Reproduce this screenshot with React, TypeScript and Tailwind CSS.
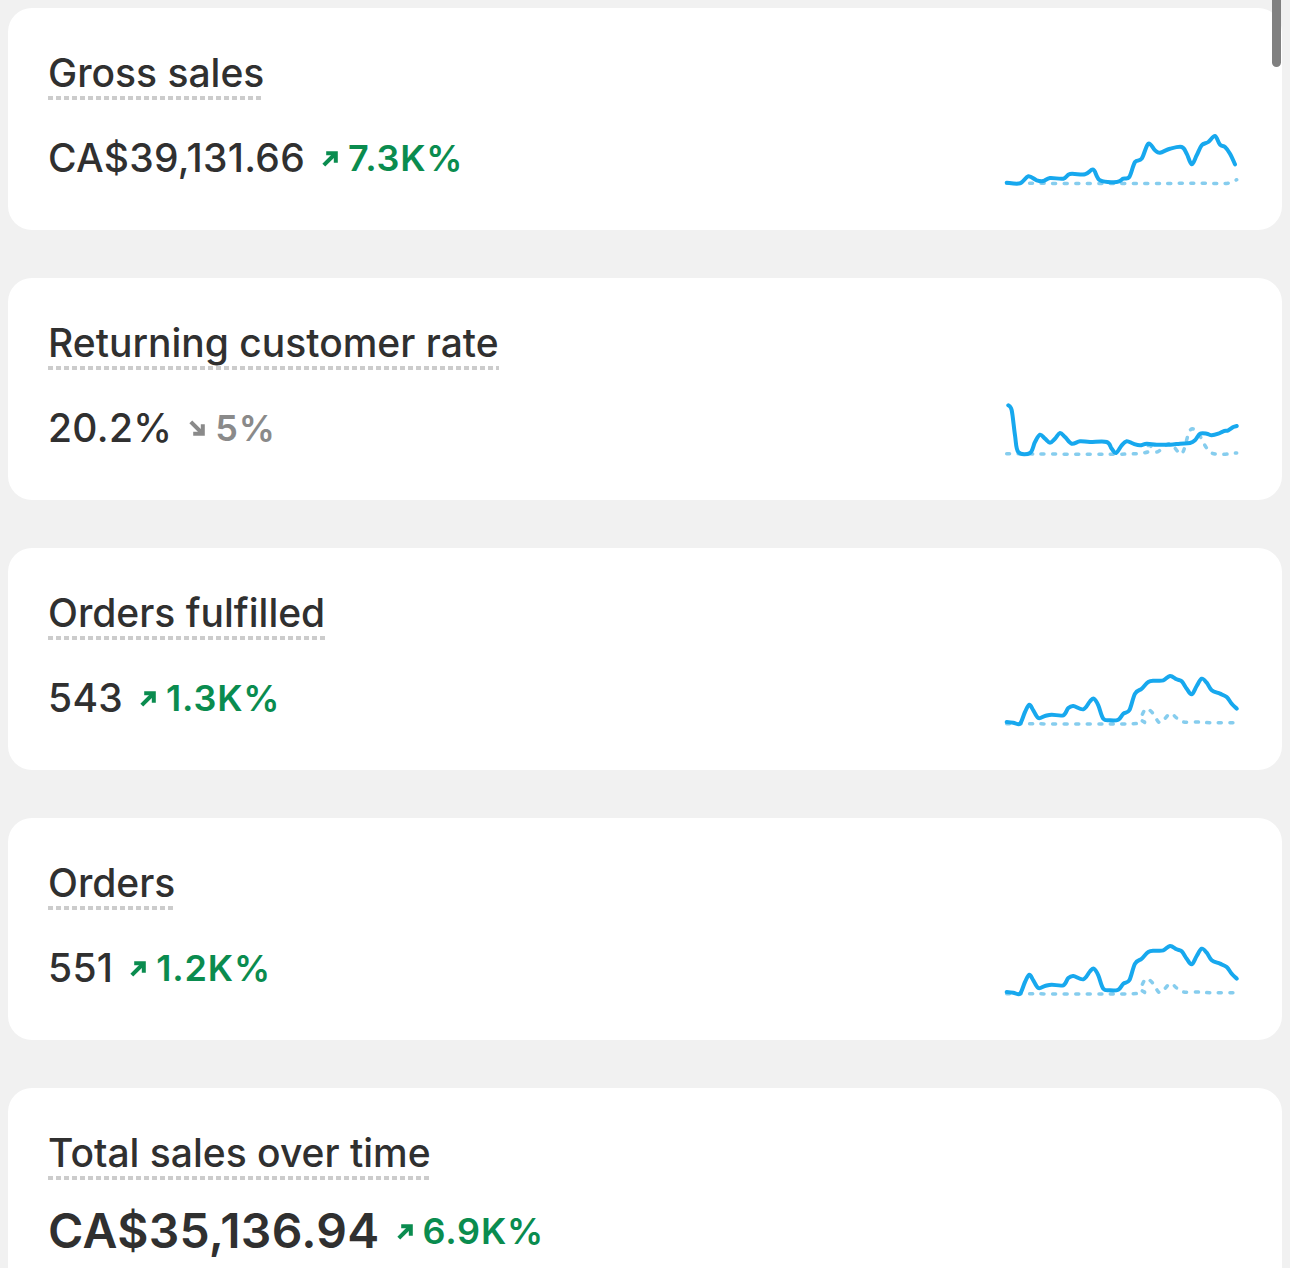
import React from 'react';

type Pt = [number, number];

// Catmull-Rom -> cubic bezier, gives the soft line of the sparklines
function smooth(pts: Pt[]): string {
  let d = `M${pts[0][0]},${pts[0][1]}`;
  for (let i = 0; i < pts.length - 1; i++) {
    const p0 = pts[i - 1] || pts[i];
    const p1 = pts[i];
    const p2 = pts[i + 1];
    const p3 = pts[i + 2] || p2;
    const c1x = p1[0] + (p2[0] - p0[0]) / 6;
    const c1y = p1[1] + (p2[1] - p0[1]) / 6;
    const c2x = p2[0] - (p3[0] - p1[0]) / 6;
    const c2y = p2[1] - (p3[1] - p1[1]) / 6;
    d += ` C${c1x.toFixed(1)},${c1y.toFixed(1)} ${c2x.toFixed(1)},${c2y.toFixed(1)} ${p2[0]},${p2[1]}`;
  }
  return d;
}

const grossNow: Pt[] = [
  [4.7, 56.7], [18, 57.3], [26.3, 50.3], [34.7, 54.3], [41.3, 55], [48, 52], [61.3, 52.7], [68, 48],
  [83, 48.3], [91.3, 43.7], [98, 54.3], [114.7, 56], [121.3, 52.7], [127.3, 51], [133, 36], [139.7, 32.7],
  [146.3, 17.7], [153, 24.3], [158, 26.7], [168, 22.7], [179.7, 21], [184.7, 27.7], [189.7, 38.3],
  [194.7, 29.3], [199.7, 19.3], [206.3, 16], [213, 10], [218, 18.7], [223, 21], [228, 27.7], [233, 38.3],
];
const grossPrev: Pt[] = [[4.7, 57.3], [120, 57.5], [200, 57.3], [226, 57.2], [234.7, 53.7]];

const rateNow: Pt[] = [
  [6.3, 9.3], [9.7, 14.3], [13, 39.3], [16.3, 56], [28, 57], [33, 46], [38, 38.7], [43, 42.7], [48, 46.7],
  [53, 42.7], [58, 37], [63, 41], [69.7, 47.7], [78, 45.3], [88, 46], [104.7, 46], [109.7, 52.7], [114, 57],
  [119.7, 49.3], [124.7, 45.3], [131.3, 47.7], [138, 49.3], [144.7, 47.7], [154.7, 48.7], [168, 48.7],
  [178, 47.7], [188, 47], [193, 44.3], [198, 37.7], [204.7, 37.7], [209.7, 39.3], [216.3, 37.7],
  [221.3, 35.3], [226.3, 34.3], [231.3, 31], [234.7, 30],
];
const ratePrev: Pt[] = [
  [4.7, 57.7], [134.7, 57.7], [146.7, 49.3], [154.7, 56], [168, 47.7], [179.7, 57.7], [188, 34.3],
  [196.3, 37.7], [209.7, 57], [234.7, 57],
];

const ordersNow: Pt[] = [
  [4.7, 56], [11.3, 56.7], [18, 57.7], [23, 46], [27.3, 38.7], [31.3, 44.3], [36.3, 52], [43, 50],
  [49.7, 48.7], [61.3, 49.3], [66.3, 42], [71.3, 40], [81.3, 43.3], [88, 35.3], [92, 32.7], [96.3, 39.3],
  [101.3, 52.7], [108, 54.3], [116.3, 53.7], [121.3, 47.7], [127.3, 44.3], [133, 27.7], [139.7, 22.7],
  [146.3, 16], [153, 14.7], [161.3, 14.3], [168, 10], [174.7, 13.3], [179.7, 15.3], [184.7, 22.7],
  [189.7, 28.3], [194.7, 20], [199.7, 12.7], [204.7, 16.7], [209.7, 24.3], [218, 27.7], [224.7, 31],
  [229.7, 37.7], [234.7, 42.7],
];
const ordersPrev: Pt[] = [
  [4.7, 57.7], [131.3, 57.7], [138, 52.7], [144, 42.7], [151.3, 47.7], [158, 56.7], [168, 47.7],
  [174.7, 52], [181.3, 56], [194.7, 56], [208, 56.7], [234.7, 56.7],
];

function Sparkline({ now, prev }: { now: Pt[]; prev: Pt[] }) {
  return (
    <svg width="240" height="64" viewBox="0 0 240 64" fill="none" className="shrink-0">
      <path d={smooth(prev)} stroke="#86cdee" strokeWidth="3.5" strokeDasharray="3 8.5" strokeLinecap="round" />
      <path d={smooth(now)} stroke="#17a8ee" strokeWidth="4" strokeLinecap="round" strokeLinejoin="round" />
    </svg>
  );
}

function ArrowUp() {
  return (
    <svg width="17" height="17" viewBox="0 0 17 17" fill="none" className="shrink-0">
      <path d="M1.8 15.2 L13.5 3.5" stroke="currentColor" strokeWidth="4" />
      <path d="M4.2 3.2 H13.8 V12.8" stroke="currentColor" strokeWidth="4" />
    </svg>
  );
}

function ArrowDown() {
  return (
    <svg width="17" height="17" viewBox="0 0 17 17" fill="none" className="shrink-0">
      <path d="M1.8 1.8 L13.5 13.5" stroke="currentColor" strokeWidth="4" />
      <path d="M4.2 13.8 H13.8 V4.2" stroke="currentColor" strokeWidth="4" />
    </svg>
  );
}

function Title({ text }: { text: string }) {
  return (
    <div className="inline-flex flex-col self-start">
      <span className="text-[39px] leading-[46px] font-medium text-[#303030]">{text}</span>
      <span className="block h-[4px] w-full bg-[repeating-linear-gradient(to_right,#cccccc_0px,#cccccc_5px,transparent_5px,transparent_8px)]" />
    </div>
  );
}

function Delta({ value, up }: { value: string; up: boolean }) {
  return (
    <span className={`flex items-center gap-[9px] ${up ? 'text-[#0a8c4f]' : 'text-[#8a8a8a]'}`}>
      {up ? <ArrowUp /> : <ArrowDown />}
      <span className="text-[36px] leading-[46px] font-semibold tracking-[0.8px]">{value}</span>
    </span>
  );
}

const metrics = [
  { title: 'Gross sales', value: 'CA$39,131.66', delta: '7.3K%', up: true, now: grossNow, prev: grossPrev },
  { title: 'Returning customer rate', value: '20.2%', delta: '5%', up: false, now: rateNow, prev: ratePrev },
  { title: 'Orders fulfilled', value: '543', delta: '1.3K%', up: true, now: ordersNow, prev: ordersPrev },
  { title: 'Orders', value: '551', delta: '1.2K%', up: true, now: ordersNow, prev: ordersPrev },
];

export default function App() {
  return (
    <div className="relative h-[1268px] overflow-hidden bg-[#f1f1f1] px-2 pt-2 font-['Inter','Liberation_Sans',sans-serif]">
      <div className="flex flex-col gap-12">
        {metrics.map((m) => (
          <div key={m.title} className="flex h-[222px] flex-col rounded-[24px] bg-white px-10 pt-[42px]">
            <Title text={m.title} />
            <div className="mt-[26px] flex items-center justify-between">
              <div className="flex items-center gap-[17px]">
                <span className="text-[39px] leading-[46px] font-medium text-[#303030] tracking-[0.3px]">{m.value}</span>
                <Delta value={m.delta} up={m.up} />
              </div>
              <Sparkline now={m.now} prev={m.prev} />
            </div>
          </div>
        ))}

        {/* last card runs past the bottom of the screen */}
        <div className="flex h-[400px] flex-col rounded-[24px] bg-white px-10 pt-[42px]">
          <Title text="Total sales over time" />
          <div className="mt-[22px] flex items-center gap-[17px]">
            <span className="text-[48px] leading-[58px] font-semibold text-[#303030] tracking-[0.3px]">CA$35,136.94</span>
            <Delta value="6.9K%" up />
          </div>
        </div>
      </div>

      {/* overlay scroll indicator */}
      <div className="absolute right-[9px] top-0 h-[67px] w-[9px] rounded-b-full bg-[#808080]" />
    </div>
  );
}
